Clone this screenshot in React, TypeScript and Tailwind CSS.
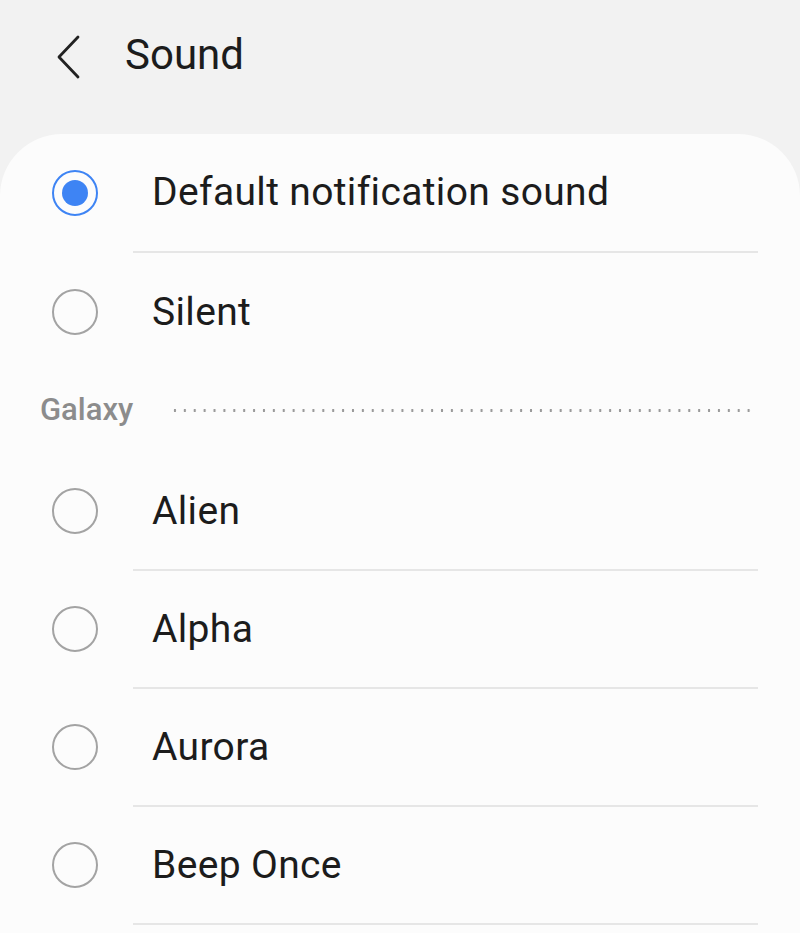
import React from "react";

const font = { fontFamily: "Roboto, 'Noto Sans', sans-serif" };

function Radio({ checked }: { checked?: boolean }) {
  if (checked) {
    return (
      <div className="w-[46px] h-[46px] rounded-full border-[2.5px] border-[#3e84f4] flex items-center justify-center shrink-0">
        <div className="w-[26px] h-[26px] rounded-full bg-[#3e84f4]" />
      </div>
    );
  }
  return <div className="w-[46px] h-[46px] rounded-full border-[2.5px] border-[#a3a3a3] shrink-0" />;
}

function Row({ label, checked, divider = true, h = "h-[116px]" }: { label: string; checked?: boolean; divider?: boolean; h?: string }) {
  return (
    <div>
      <div className={`${h} flex items-center pl-[52px]`}>
        <Radio checked={checked} />
        <span className="ml-[54px] text-[39px] text-[#1c1c1c] tracking-[0.35px]">{label}</span>
      </div>
      {divider && <div className="ml-[133px] mr-[42px] h-[2px] bg-[#e6e6e6]" />}
    </div>
  );
}

export default function App() {
  return (
    <div className="w-[800px] h-[933px] bg-[#f2f2f2] overflow-hidden" style={font}>
      <div className="h-[134px] flex items-start pt-[30px]">
        <svg width="80" height="50" viewBox="0 0 80 50" className="ml-[30px] mt-[2px]">
          <path d="M48 5 L29 25 L48 45" fill="none" stroke="#222" strokeWidth="2.8" strokeLinecap="round" strokeLinejoin="round" />
        </svg>
        <span className="ml-[15px] text-[42px] leading-[50px] text-[#1c1c1c]">Sound</span>
      </div>
      <div className="bg-[#fcfcfc] rounded-t-[62px] h-[799px]">
        <Row label="Default notification sound" checked h="h-[117px]" />
        <Row label="Silent" divider={false} h="h-[118px]" />
        <div className="h-[82px] flex items-center pl-[40px] pb-[4px]">
          <span className="text-[31px] font-medium text-[#8c8c8c]">Galaxy</span>
          <div className="ml-[37px] mr-[44px] flex-1 h-[3px] bg-[radial-gradient(circle,#9a9a9a_1.3px,transparent_1.5px)] bg-[length:9.9px_3px]" />
        </div>
        <Row label="Alien" />
        <Row label="Alpha" />
        <Row label="Aurora" />
        <Row label="Beep Once" />
      </div>
    </div>
  );
}
